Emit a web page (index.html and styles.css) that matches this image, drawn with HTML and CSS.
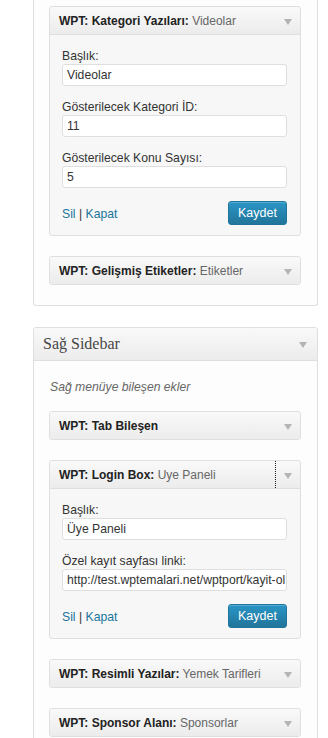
FILE: index.html
```html
<!DOCTYPE html>
<html lang="tr">
<head>
<meta charset="utf-8">
<title>Widgets</title>
<link rel="stylesheet" href="styles.css">
</head>
<body>
<div class="page">
  <div class="holder cut">
    <div class="widget open">
      <div class="widget-top">
        <h4 class="widget-title">WPT: Kategori Yazıları:<span class="in-title"> Videolar</span></h4>
        <div class="widget-action"><span class="arrow"></span></div>
      </div>
      <div class="widget-inside">
        <div class="field">
          <label class="label">Başlık:</label>
          <div class="input">Videolar</div>
        </div>
        <div class="field">
          <label class="label">Gösterilecek Kategori İD:</label>
          <div class="input">11</div>
        </div>
        <div class="field">
          <label class="label">Gösterilecek Konu Sayısı:</label>
          <div class="input">5</div>
        </div>
        <div class="controls">
          <div class="links"><a class="link">Sil</a> | <a class="link">Kapat</a></div>
          <button class="button-primary">Kaydet</button>
        </div>
      </div>
    </div>
    <div class="widget">
      <div class="widget-top">
        <h4 class="widget-title">WPT: Gelişmiş Etiketler:<span class="in-title"> Etiketler</span></h4>
        <div class="widget-action"><span class="arrow"></span></div>
      </div>
    </div>
  </div>

  <div class="holder">
    <div class="holder-head">
      <h3 class="holder-title">Sağ Sidebar</h3>
      <span class="arrow"></span>
    </div>
    <div class="holder-body">
      <p class="description">Sağ menüye bileşen ekler</p>
      <div class="widget">
        <div class="widget-top">
          <h4 class="widget-title">WPT: Tab Bileşen</h4>
          <div class="widget-action"><span class="arrow"></span></div>
        </div>
      </div>
      <div class="widget open">
        <div class="widget-top">
          <h4 class="widget-title">WPT: Login Box:<span class="in-title"> Uye Paneli</span></h4>
          <div class="widget-action focused"><span class="arrow"></span></div>
        </div>
        <div class="widget-inside">
          <div class="field">
            <label class="label">Başlık:</label>
            <div class="input">Üye Paneli</div>
          </div>
          <div class="field">
            <label class="label">Özel kayıt sayfası linki:</label>
            <div class="input">http://test.wptemalari.net/wptport/kayit-ol</div>
          </div>
          <div class="controls">
            <div class="links"><a class="link">Sil</a> | <a class="link">Kapat</a></div>
            <button class="button-primary">Kaydet</button>
          </div>
        </div>
      </div>
      <div class="widget">
        <div class="widget-top">
          <h4 class="widget-title">WPT: Resimli Yazılar:<span class="in-title"> Yemek Tarifleri</span></h4>
          <div class="widget-action"><span class="arrow"></span></div>
        </div>
      </div>
      <div class="widget">
        <div class="widget-top">
          <h4 class="widget-title">WPT: Sponsor Alanı:<span class="in-title"> Sponsorlar</span></h4>
          <div class="widget-action"><span class="arrow"></span></div>
        </div>
      </div>
    </div>
  </div>
</div>
</body>
</html>
```

FILE: styles.css
```css
html, body {
  margin: 0;
  padding: 0;
  background: #ffffff;
  font-family: "Liberation Sans", Arial, sans-serif;
  font-size: 12.2px;
  color: #333333;
}

.page {
  padding: 0 10px 0 33px;
  display: flex;
  flex-direction: column;
  gap: 21px;
}

.holder {
  width: 285px;
  box-sizing: border-box;
  border: 1px solid #dfdfdf;
  border-radius: 3px;
  background: #fdfdfd;
}

.holder.cut {
  border-top: none;
  border-top-left-radius: 0;
  border-top-right-radius: 0;
  padding: 6px 16px 20px 15px;
  display: flex;
  flex-direction: column;
  gap: 20px;
}

.holder-head {
  height: 33px;
  box-sizing: border-box;
  border-bottom: 1px solid #dfdfdf;
  background: linear-gradient(to bottom, #f9f9f9, #ececec);
  display: flex;
  align-items: center;
  justify-content: space-between;
  padding: 0 10px 0 9px;
  border-top-left-radius: 3px;
  border-top-right-radius: 3px;
}

.holder-title {
  margin: 0;
  font-family: "Liberation Serif", Georgia, serif;
  font-weight: normal;
  font-size: 16px;
  color: #464646;
}

.holder-body {
  padding: 0 16px 20px 15px;
  display: flex;
  flex-direction: column;
  gap: 20px;
}

.description {
  margin: 18px 0 -4px 1px;
  font-style: italic;
  color: #666666;
  line-height: 16px;
}

.widget {
  border: 1px solid #dfdfdf;
  border-radius: 3px;
  background: #f7f7f7;
}

.widget-top {
  height: 27px;
  display: flex;
  align-items: stretch;
  background: linear-gradient(to bottom, #f9f9f9, #ececec);
  border-radius: 3px;
}

.widget.open .widget-top {
  border-bottom: 1px solid #dfdfdf;
  border-bottom-left-radius: 0;
  border-bottom-right-radius: 0;
}

.widget-title {
  flex: 1;
  margin: 0;
  padding-left: 9px;
  display: flex;
  align-items: center;
  font-size: 12px;
  font-weight: bold;
  color: #222222;
  white-space: pre;
}

.in-title {
  font-weight: normal;
  color: #666666;
}

.widget-action {
  width: 25px;
  display: flex;
  align-items: center;
  justify-content: center;
  box-sizing: border-box;
  padding-left: 1px;
}

.widget-action.focused {
  border-left: 1px dotted #222222;
  padding-left: 0;
}

.arrow {
  width: 0;
  height: 0;
  border-left: 4px solid transparent;
  border-right: 4px solid transparent;
  border-top: 6px solid #b4b4b4;
  margin-top: 2px;
}

.widget-inside {
  padding: 13px 13px 10px 12px;
  display: flex;
  flex-direction: column;
  gap: 13px;
}

.field {
  display: flex;
  flex-direction: column;
}

.label {
  display: block;
  line-height: 16px;
  color: #333333;
}

.input {
  height: 22px;
  box-sizing: border-box;
  border: 1px solid #dfdfdf;
  border-radius: 3px;
  background: #ffffff;
  padding: 0 4px;
  line-height: 20px;
  color: #333333;
  white-space: nowrap;
  overflow: hidden;
}

.controls {
  display: flex;
  justify-content: space-between;
  align-items: center;
}

.links {
  color: #333333;
  line-height: 16px;
  padding-top: 2px;
}

.link {
  color: #21759b;
  text-decoration: none;
}

.button-primary {
  height: 24px;
  width: 59px;
  padding: 0;
  box-sizing: border-box;
  border: 1px solid #21759b;
  border-radius: 3px;
  background: linear-gradient(to bottom, #2a95c5, #21759b);
  color: #ffffff;
  font-family: "Liberation Sans", Arial, sans-serif;
  font-size: 12.5px;
  box-shadow: inset 0 1px 0 rgba(120, 200, 230, 0.5);
}
```
